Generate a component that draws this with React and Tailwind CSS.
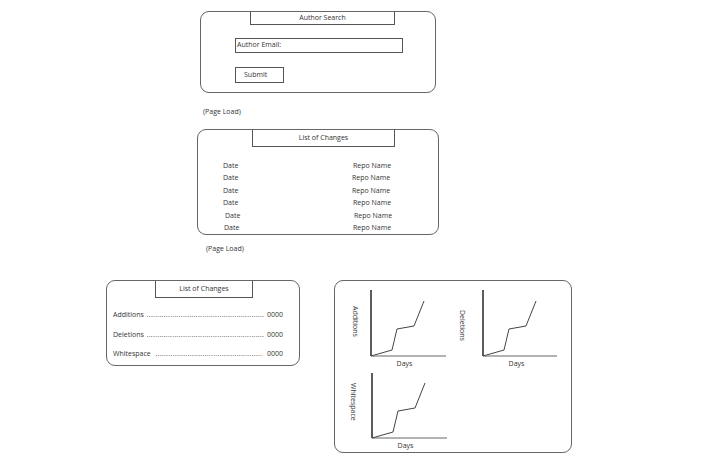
import React from 'react'

const font = { fontFamily: '"Open Sans", "Liberation Sans", sans-serif' }

function Tab({ title, className }) {
  return (
    <div className={`border border-t-0 border-[#555] flex items-center justify-center text-[7px] text-[#333] ${className}`}>
      {title}
    </div>
  )
}

function Chart({ label, labelClass, axisW, axisH }) {
  return (
    <div className="flex items-start">
      <div className={`text-[7px] text-[#333] [writing-mode:vertical-rl] ${labelClass}`}>{label}</div>
      <div className="flex flex-col items-center">
        <svg width={axisW} height={axisH} viewBox={`0 0 ${axisW} ${axisH}`}>
          <line x1="1" y1="0" x2="1" y2={axisH - 1} stroke="#333" strokeWidth="1.6" />
          <line x1="1" y1={axisH - 1} x2={axisW} y2={axisH - 1} stroke="#666" strokeWidth="1" />
          <polyline
            points={`1,${axisH - 1} 22,${axisH - 7} 27,${axisH - 28} 44,${axisH - 31} 54,${axisH - 56}`}
            fill="none"
            stroke="#444"
            strokeWidth="1"
          />
        </svg>
        <div className="text-[7px] text-[#333] mt-[2px] leading-[9px] pr-[6px]">Days</div>
      </div>
    </div>
  )
}

export default function App() {
  const rows = [
    { dm: 'ml-[25px]', rm: 'ml-[110px]' },
    { dm: 'ml-[25px]', rm: 'ml-[109px]' },
    { dm: 'ml-[25px]', rm: 'ml-[109px]' },
    { dm: 'ml-[25px]', rm: 'ml-[110px]' },
    { dm: 'ml-[27px]', rm: 'ml-[109px]' },
    { dm: 'ml-[26px]', rm: 'ml-[109px]' },
  ]
  const totals = [
    { label: 'Additions', dots: 55 },
    { label: 'Deletions', dots: 55 },
    { label: 'Whitespace', dots: 50 },
  ]

  return (
    <div className="w-[705px] h-[458px] bg-white overflow-hidden text-[#333]" style={font}>
      {/* author search */}
      <div className="ml-[200px] mt-[11px] w-[236px] h-[82px] border border-[#666] rounded-[9px]">
        <Tab title="Author Search" className="ml-[49px] w-[145px] h-[13px]" />
        <div className="ml-[34px] mt-[13px] w-[168px] h-[15px] border border-[#555] flex items-center pl-[1px] text-[7px]">
          Author Email:
        </div>
        <div className="ml-[34px] mt-[14px] w-[49px] h-[16px] border border-[#555] flex items-center pl-[8px] text-[7px]">
          Submit
        </div>
      </div>

      <div className="ml-[203px] mt-[14px] text-[7px] leading-[10px]">(Page Load)</div>

      {/* list of changes */}
      <div className="ml-[197px] mt-[12px] w-[242px] h-[106px] border border-[#666] rounded-[9px]">
        <Tab title="List of Changes" className="ml-[54px] w-[143px] h-[17px]" />
        <div className="mt-[13px] flex flex-col">
          {rows.map((r, i) => (
            <div key={i} className="flex h-[12.4px] items-center text-[7px]">
              <span className={`${r.dm} w-[20px]`}>Date</span>
              <span className={r.rm}>Repo Name</span>
            </div>
          ))}
        </div>
      </div>

      <div className="ml-[206px] mt-[9px] text-[7px] leading-[10px]">(Page Load)</div>

      {/* bottom row */}
      <div className="flex mt-[26px] items-start">
        <div className="ml-[106px] w-[194px] h-[86px] border border-[#666] rounded-[9px]">
          <Tab title="List of Changes" className="ml-[48px] w-[98px] h-[17px]" />
          <div className="mt-[12px] flex flex-col gap-[9.5px] pl-[6px] pr-[16px]">
            {totals.map((t) => (
              <div key={t.label} className="flex items-center justify-between text-[7px] leading-[10px]">
                <span>{t.label}</span>
                <span className="whitespace-nowrap tracking-[0.3px] text-[#444]">{'.'.repeat(t.dots)}</span>
                <span>0000</span>
              </div>
            ))}
          </div>
        </div>

        <div className="ml-[34px] w-[238px] h-[173px] border border-[#666] rounded-[9px]">
          <div className="flex pt-[9px]">
            <div className="ml-[14px]">
              <Chart label="Additions" labelClass="mt-[16px] mr-[10px]" axisW={76} axisH={67} />
            </div>
            <div className="ml-[11px]">
              <Chart label="Deletions" labelClass="mt-[20px] mr-[15px]" axisW={75} axisH={67} />
            </div>
          </div>
          <div className="flex mt-[5px] ml-[12px]">
            <Chart label="Whitespace" labelClass="mt-[10px] mr-[13px]" axisW={76} axisH={66} />
          </div>
        </div>
      </div>
    </div>
  )
}
